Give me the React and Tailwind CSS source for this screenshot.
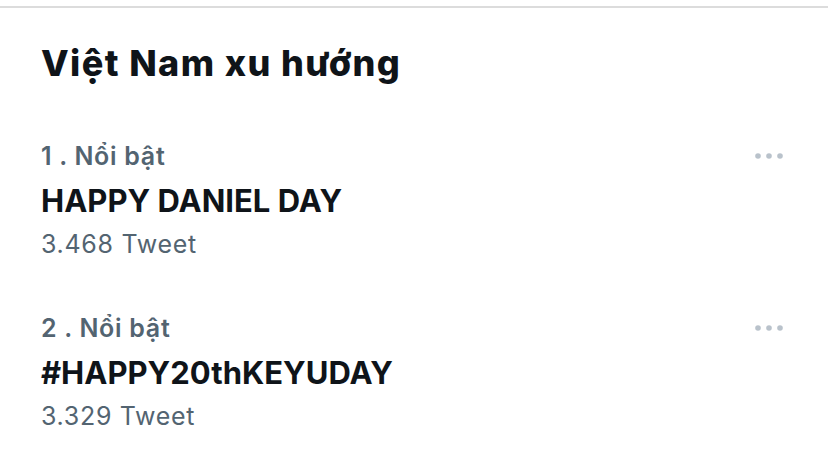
import React from 'react';

const trends = [
  { rank: 1, label: 'Nổi bật', name: 'HAPPY DANIEL DAY', count: '3.468 Tweet' },
  { rank: 2, label: 'Nổi bật', name: '#HAPPY20thKEYUDAY', count: '3.329 Tweet' },
];

const MoreDots = () => (
  <svg width="28" height="6" viewBox="0 0 28 6" className="mt-[13px] shrink-0">
    <circle cx="3" cy="3" r="2.8" fill="#b9c2cb" />
    <circle cx="14" cy="3" r="2.8" fill="#b9c2cb" />
    <circle cx="25" cy="3" r="2.8" fill="#b9c2cb" />
  </svg>
);

const App = () => {
  return (
    <div className="w-[828px] h-[460px] bg-white overflow-hidden font-['Inter',sans-serif] text-[#0f1419]">
      <div className="mt-[6px] h-[2px] bg-[#dcdcdc]" />

      <h2 className="mt-[35px] pl-[41px] text-[36px] leading-[40px] font-extrabold tracking-[1.4px]">
        Việt Nam xu hướng
      </h2>

      <div className="mt-[57px] flex flex-col gap-[52px]">
        {trends.map((trend) => (
          <div key={trend.rank} className="flex items-start justify-between pl-[41px] pr-[45px]">
            <div className="flex flex-col">
              <span className="text-[25px] leading-[32px] font-semibold tracking-[0.7px] text-[#536471]">
                {trend.rank} . {trend.label}
              </span>
              <span className="mt-[9px] text-[31px] leading-[40px] font-bold">
                {trend.name}
              </span>
              <span className="mt-[7px] text-[25px] leading-[32px] tracking-[0.7px] text-[#536471]">
                {trend.count}
              </span>
            </div>
            <MoreDots />
          </div>
        ))}
      </div>
    </div>
  );
};

export default App;
